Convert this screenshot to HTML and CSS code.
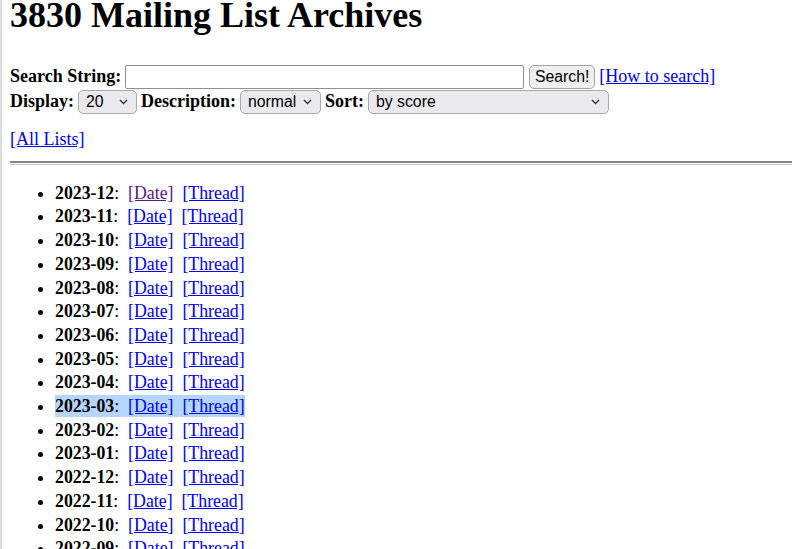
FILE: index.html
```html
<!DOCTYPE html>
<html lang="en">
<head>
<meta charset="utf-8">
<title>3830 Mailing List Archives</title>
<link rel="stylesheet" href="styles.css">
</head>
<body>
<h1 class="title">3830 Mailing List Archives</h1>
<form class="search">
  <div class="row">
    <label class="lbl" for="q">Search String:</label>
    <input id="q" class="text" type="text">
    <button class="btn" type="button">Search!</button>
    <a class="link" href="#">[How to search]</a>
  </div>
  <div class="row">
    <label class="lbl" for="d">Display:</label>
    <select id="d" class="sel sel-display"><option>20</option></select>
    <label class="lbl" for="desc">Description:</label>
    <select id="desc" class="sel sel-desc"><option>normal</option></select>
    <label class="lbl" for="s">Sort:</label>
    <select id="s" class="sel sel-sort"><option>by score</option></select>
  </div>
</form>
<p class="all"><a class="link" href="#">[All Lists]</a></p>
<hr class="rule">
<ul class="months">
  <li><b>2023-12</b>:&nbsp; <a class="link visited" href="#">[Date]</a>&nbsp; <a class="link" href="#">[Thread]</a></li>
  <li><b>2023-11</b>:&nbsp; <a class="link" href="#">[Date]</a>&nbsp; <a class="link" href="#">[Thread]</a></li>
  <li><b>2023-10</b>:&nbsp; <a class="link" href="#">[Date]</a>&nbsp; <a class="link" href="#">[Thread]</a></li>
  <li><b>2023-09</b>:&nbsp; <a class="link" href="#">[Date]</a>&nbsp; <a class="link" href="#">[Thread]</a></li>
  <li><b>2023-08</b>:&nbsp; <a class="link" href="#">[Date]</a>&nbsp; <a class="link" href="#">[Thread]</a></li>
  <li><b>2023-07</b>:&nbsp; <a class="link" href="#">[Date]</a>&nbsp; <a class="link" href="#">[Thread]</a></li>
  <li><b>2023-06</b>:&nbsp; <a class="link" href="#">[Date]</a>&nbsp; <a class="link" href="#">[Thread]</a></li>
  <li><b>2023-05</b>:&nbsp; <a class="link" href="#">[Date]</a>&nbsp; <a class="link" href="#">[Thread]</a></li>
  <li><b>2023-04</b>:&nbsp; <a class="link" href="#">[Date]</a>&nbsp; <a class="link" href="#">[Thread]</a></li>
  <li><span class="hl"><b>2023-03</b>:&nbsp; <a class="link" href="#">[Date]</a>&nbsp; <a class="link" href="#">[Thread]</a></span></li>
  <li><b>2023-02</b>:&nbsp; <a class="link" href="#">[Date]</a>&nbsp; <a class="link" href="#">[Thread]</a></li>
  <li><b>2023-01</b>:&nbsp; <a class="link" href="#">[Date]</a>&nbsp; <a class="link" href="#">[Thread]</a></li>
  <li><b>2022-12</b>:&nbsp; <a class="link" href="#">[Date]</a>&nbsp; <a class="link" href="#">[Thread]</a></li>
  <li><b>2022-11</b>:&nbsp; <a class="link" href="#">[Date]</a>&nbsp; <a class="link" href="#">[Thread]</a></li>
  <li><b>2022-10</b>:&nbsp; <a class="link" href="#">[Date]</a>&nbsp; <a class="link" href="#">[Thread]</a></li>
  <li><b>2022-09</b>:&nbsp; <a class="link" href="#">[Date]</a>&nbsp; <a class="link" href="#">[Thread]</a></li>
</ul>
</body>
</html>
```

FILE: styles.css
```css
html {
  border-left: 2px solid #dedede;
  background: #fff;
}
body {
  margin: 0 0 0 8px;
  font-family: "Liberation Serif", "Times New Roman", serif;
  font-size: 18px;
  line-height: 23.7px;
  color: #000;
  overflow: hidden;
}
.title {
  font-size: 36px;
  font-weight: bold;
  line-height: 41px;
  margin: -5px 0 28px;
}
.search {
  margin: 0;
}
.row {
  display: flex;
  align-items: center;
  gap: 4px;
  height: 25px;
}
.lbl {
  font-weight: bold;
}
.text {
  box-sizing: border-box;
  width: 399px;
  height: 24px;
  border: 1px solid #8f8f9d;
  border-radius: 2px;
  background: #fff;
  margin: 0;
}
.btn {
  box-sizing: border-box;
  width: 66px;
  height: 24px;
  margin: 0 0 0 1px;
  padding: 0;
  font-family: "Liberation Sans", Arial, sans-serif;
  font-size: 15.8px;
  color: #000;
  background: #efeff0;
  border: 1px solid #a4a4a8;
  border-radius: 5px;
}
.link {
  color: #0000ee;
  text-decoration: underline;
}
.visited {
  color: #551a8b;
}
.sel {
  -webkit-appearance: none;
  appearance: none;
  box-sizing: border-box;
  height: 24px;
  margin: 0;
  padding: 0 0 0 7px;
  font-family: "Liberation Sans", Arial, sans-serif;
  font-size: 15.8px;
  color: #000;
  background-color: #e9e9ee;
  background-image: url("data:image/svg+xml,%3Csvg xmlns='http://www.w3.org/2000/svg' width='9' height='6' viewBox='0 0 9 6'%3E%3Cpath d='M1 1l3.5 3.5L8 1' fill='none' stroke='%23333' stroke-width='1.4'/%3E%3C/svg%3E");
  background-repeat: no-repeat;
  background-position: right 8px center;
  border: 1px solid #a9a9ae;
  border-radius: 5px;
}
.sel-display { width: 59px; }
.sel-desc { width: 81px; }
.sel-sort { width: 241px; }
.all {
  margin: 14px 0 9px;
}
.rule {
  height: 1px;
  border: 0;
  border-top: 2px solid #858585;
  border-bottom: 1px solid #bdbdbd;
  margin: 0 -20px 17px 0;
}
.months {
  margin: 0;
  padding-left: 45px;
  font-size: 17.8px;
}
.hl {
  background: #b4d5fe;
  padding: 1px 0;
}
```
